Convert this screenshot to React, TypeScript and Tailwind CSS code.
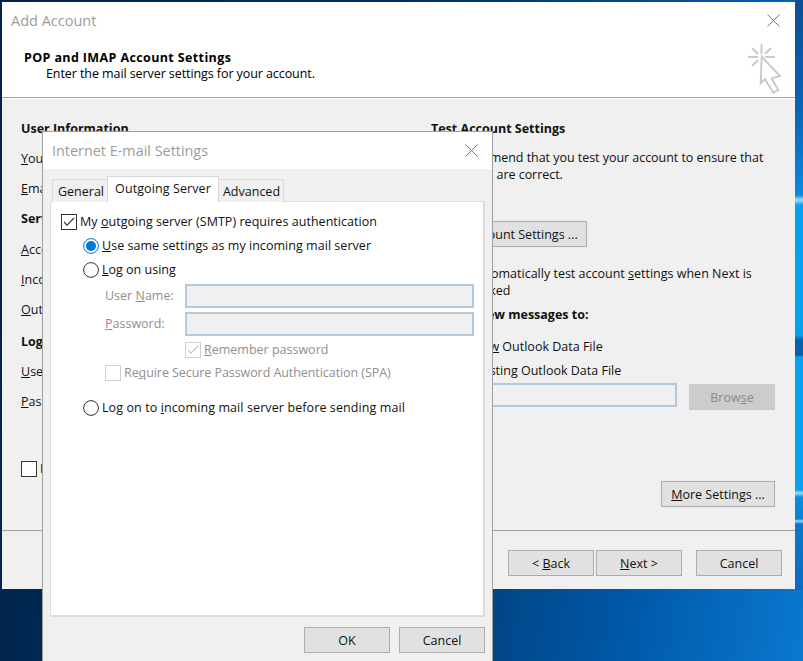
import React from "react";

const F = "font-['Open_Sans','Noto_Sans',sans-serif] text-[12.5px] text-[#111]";

function Btn({ children, className = "", disabled = false }: { children: React.ReactNode; className?: string; disabled?: boolean }) {
  return (
    <div className={`h-[26px] flex items-center justify-center border ${disabled ? "bg-[#cccccc] border-[#cccccc] text-[#8a8a8a]" : "bg-[#e1e1e1] border-[#adadad] text-[#111]"} ${className}`}>
      <span className="relative top-[1px]">{children}</span>
    </div>
  );
}

function Check({ checked = false, disabled = false }: { checked?: boolean; disabled?: boolean }) {
  const c = disabled ? "#cfcfcf" : "#333333";
  return (
    <svg width="16" height="16" viewBox="0 0 16 16" className="shrink-0">
      <rect x="0.5" y="0.5" width="15" height="15" fill={disabled ? "none" : "#fff"} stroke={c} />
      {checked && <path d="M3 8l3 3.2L13 4" fill="none" stroke={disabled ? "#c4c4c4" : "#333"} strokeWidth="1.1" />}
    </svg>
  );
}

function Radio({ on = false }: { on?: boolean }) {
  return (
    <svg width="16" height="16" viewBox="0 0 16 16" className="shrink-0">
      <circle cx="8" cy="8" r="7.4" fill="#fff" stroke={on ? "#0078d7" : "#333"} />
      {on && <circle cx="8" cy="8" r="5" fill="#0078d7" />}
    </svg>
  );
}

function X({ className = "" }: { className?: string }) {
  return (
    <svg width="13" height="13" viewBox="0 0 13 13" className={className}>
      <path d="M0.5 0.5l12 12M12.5 0.5l-12 12" stroke="#777" strokeWidth="1" fill="none" />
    </svg>
  );
}

function Row({ h, children, className = "" }: { h: string; children: React.ReactNode; className?: string }) {
  return <div className={`flex items-center ${h} ${className}`}>{children}</div>;
}

function Outer() {
  return (
    <div className="absolute left-[2px] top-[2px] w-[793px] h-[587px] flex flex-col bg-[#f0f0f0]">
      <div className="h-[95px] bg-white relative shrink-0 pt-[47px] pl-[22px]">
        <div className="absolute left-[9px] top-[8px] text-[14.5px] leading-[21px] text-[#9c9c9c]">Add Account</div>
        <X className="absolute left-[765px] top-[12px]" />
        <div className="font-bold leading-[18px] text-black tracking-[0.38px]">POP and IMAP Account Settings</div>
        <div className="pl-[22px] leading-[16px] text-black -mt-[1px] tracking-[-0.08px]">Enter the mail server settings for your account.</div>
        <svg width="34" height="50" viewBox="0 0 34 50" className="absolute left-[746px] top-[42px]">
          <path d="M13.5 0v10M0 13h10M17 13h10M4 4l6 6M23 4l-6 6M4 22l6-6" stroke="#c9c9c9" strokeWidth="2" fill="none" />
          <path d="M13.7 12.7L32 32l-8.3 2.3L30.3 46l-5 2.7L17 35.3l-4.3 4z" fill="#fff" stroke="#c9c9c9" strokeWidth="1.9" />
        </svg>
      </div>
      <div className="h-[1px] bg-[#a0a0a0] shrink-0" />
      <div className="h-[1px] bg-white shrink-0" />
      <div className="flex h-[432px] shrink-0 border-b border-[#a0a0a0]">
        <div className="w-[429px] pl-[19px] pt-[20px] shrink-0">
          <Row h="h-[20px]" className="font-bold">User Information</Row>
          <Row h="h-[30px] mt-[5px]"><span><u>Y</u>our Name:</span></Row>
          <Row h="h-[30px]"><span><u>E</u>mail Address:</span></Row>
          <Row h="h-[31px] font-bold">Server Information</Row>
          <Row h="h-[31px]"><span><u>A</u>ccount Type:</span></Row>
          <Row h="h-[29px]"><span><u>I</u>ncoming mail server:</span></Row>
          <Row h="h-[30px]"><span><u>O</u>utgoing mail server:</span></Row>
          <Row h="h-[32px] pt-[2px] font-bold">Logon Information</Row>
          <Row h="h-[30px]"><span><u>U</u>ser Name:</span></Row>
          <Row h="h-[30px]"><span><u>P</u>assword:</span></Row>
          <Row h="h-[16px] mt-[44px] gap-[3px]"><Check />Require logon using SPA</Row>
        </div>
        <div className="w-[345px] pt-[20px] shrink-0">
          <Row h="h-[20px]" className="font-bold">Test Account Settings</Row>
          <div className="mt-[10px] leading-[17px] w-[340px] tracking-[-0.04px]">We recommend that you test your account to ensure that the entries are correct.</div>
          <Btn className="w-[156px] mt-[38px]">Test Account Settings ...</Btn>
          <div className="mt-[18px] flex gap-[3px] pl-[21px] w-[330px]">
            <div className="pt-[1px]"><Check checked /></div>
            <div className="leading-[17px]">Automatically test account <u>s</u>ettings when Next is clicked</div>
          </div>
          <Row h="h-[20px] mt-[6px]" className="font-bold">Deliver new messages to:</Row>
          <Row h="h-[24px] mt-[10px] gap-[3px] pl-[23px]"><Radio on /><span>Ne<u>w</u> Outlook Data File</span></Row>
          <Row h="h-[24px] gap-[3px] pl-[23px]"><Radio />Existing Outlook Data File</Row>
          <div className="flex items-start">
            <div className="w-[246px] h-[24px] border-2 border-[#b4c8dc] bg-[#f0f0f0]" />
            <Btn disabled className="w-[86px] ml-[12px] mt-[1px]">Brow<u>s</u>e</Btn>
          </div>
          <div className="flex justify-end mt-[71px] w-[344px]">
            <Btn className="w-[114px]"><u>M</u>ore Settings ...</Btn>
          </div>
        </div>
      </div>
      <div className="flex pl-[506px] pt-[19px]">
        <Btn className="w-[86px]">&lt; <u>B</u>ack</Btn>
        <Btn className="w-[86px] ml-[2px]"><u>N</u>ext &gt;</Btn>
        <Btn className="w-[86px] ml-[14px]">Cancel</Btn>
      </div>
    </div>
  );
}

function Dialog() {
  return (
    <div className="absolute left-[42px] top-[131px] w-[451px] h-[530px] flex flex-col bg-[#f0f0f0] border-x border-t border-[#a0a0a0]">
      <div className="h-[37px] bg-white relative shrink-0 pl-[9px] pt-[8px]">
        <div className="text-[14.4px] leading-[21px] text-[#9c9c9c]">Internet E-mail Settings</div>
        <X className="absolute left-[422px] top-[12px]" />
      </div>
      <div className="flex items-end h-[33px] pl-[9px] shrink-0 relative z-10 -mb-[1px]">
        <div className="w-[56px] h-[23px] border border-b-0 border-[#d9d9d9] bg-[#f0f0f0] flex items-center justify-center pt-[2px] pl-[2px]">General</div>
        <div className="w-[112px] h-[26px] border border-b-0 border-[#d9d9d9] bg-white flex items-start pt-[3px] justify-center -ml-[1px] relative tracking-[0.1px]">Outgoing Server</div>
        <div className="w-[66px] h-[23px] border border-b-0 border-[#d9d9d9] bg-[#f0f0f0] flex items-center justify-center -ml-[1px] pt-[2px] pl-[1px]">Advanced</div>
      </div>
      <div className="mx-[7px] h-[416px] shrink-0 bg-white border-2 border-[#dcdcdc] border-t border-l pl-[10px] pt-[12px]">
        <Row h="h-[16px]" className="gap-[3px] tracking-[0.04px]"><Check checked /><span>My <u>o</u>utgoing server (SMTP) requires authentication</span></Row>
        <div className="pl-[22px]">
          <Row h="h-[16px] mt-[8px] gap-[3px] tracking-[0.04px]"><Radio on /><span><u>U</u>se same settings as my incoming mail server</span></Row>
          <Row h="h-[16px] mt-[8px] gap-[3px]"><Radio /><span><u>L</u>og on using</span></Row>
        </div>
        <div className="pl-[44px] text-[#8f8f8f]">
          <Row h="h-[24px] mt-[6px]"><span className="w-[80px]">User <u>N</u>ame:</span><div className="w-[289px] h-[24px] border-2 border-[#b4c8dc] bg-[#f0f0f0]" /></Row>
          <Row h="h-[24px] mt-[4px]"><span className="w-[80px]"><u>P</u>assword:</span><div className="w-[289px] h-[24px] border-2 border-[#b4c8dc] bg-[#f0f0f0]" /></Row>
          <Row h="h-[16px] mt-[6px] pl-[80px] gap-[3px]"><Check checked disabled /><span><u>R</u>emember password</span></Row>
          <Row h="h-[16px] mt-[7px] gap-[3px] tracking-[-0.07px]"><Check disabled /><span>Re<u>q</u>uire Secure Password Authentication (SPA)</span></Row>
        </div>
        <div className="pl-[22px]">
          <Row h="h-[16px] mt-[19px] gap-[3px] tracking-[0.1px]"><Radio /><span>Log on to <u>i</u>ncoming mail server before sending mail</span></Row>
        </div>
      </div>
      <div className="flex pl-[261px] pt-[10px]">
        <Btn className="w-[86px]">OK</Btn>
        <Btn className="w-[86px] ml-[9px]">Cancel</Btn>
      </div>
    </div>
  );
}

export default function App() {
  return (
    <div className={`relative w-[803px] h-[661px] overflow-hidden bg-[linear-gradient(100deg,#00234a_0%,#00305f_45%,#00427f_62%,#0058a8_80%,#0a78cf_100%)] ${F}`}>
      <div className="absolute left-[795px] top-0 w-[8px] h-[590px] bg-[linear-gradient(180deg,#0a4f94_0px,#0a62b4_100px,#0a6cc0_130px,#0a8ae0_195px,#a5dcf5_200px,#06a0f0_205px,#0aa0f0_335px,#0860a8_340px,#0860a8_355px,#08a0f0_357px,#08a0f0_490px,#a0daf5_493px,#0890e0_497px,#0a80d5_519px,#a0daf5_521px,#0a78cc_524px,#0a6cc0_590px)]" />
      <Outer />
      <Dialog />
    </div>
  );
}
